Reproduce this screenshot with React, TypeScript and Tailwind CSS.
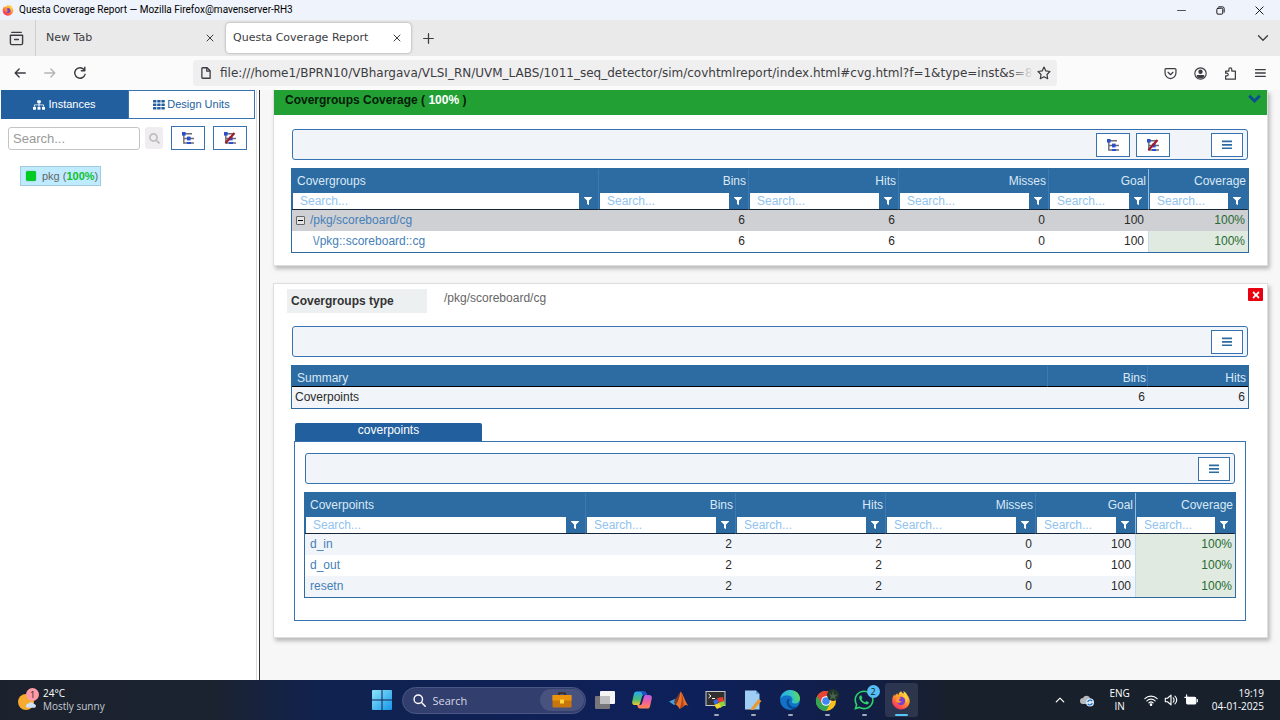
import React from "react";
import { FaSitemap, FaSearch, FaFilter, FaWhatsapp, FaTimes } from "react-icons/fa";

const UI_FONT = "font-['Open_Sans','Noto_Sans',sans-serif]";
const TITLE_FONT = "font-['Roboto','Noto_Sans',sans-serif]";
const FF_FONT = "font-['DejaVu_Sans',sans-serif]";

/* ---------- icons ---------- */

function FirefoxIcon({ className }: { className: string }) {
  return (
    <svg viewBox="0 0 24 24" className={className} aria-hidden="true">
      <defs>
        <linearGradient id="ffa" x1="0.8" y1="0" x2="0.2" y2="1">
          <stop offset="0" stopColor="#ffe14a" />
          <stop offset="0.45" stopColor="#ff9a2b" />
          <stop offset="0.8" stopColor="#ff4a4f" />
          <stop offset="1" stopColor="#e8286f" />
        </linearGradient>
      </defs>
      <path d="M12 1.500c1 1.500 2 2.200 3.200 3 .3-1.200 0-2.300-.5-3.300 3 1.300 4.300 3.300 5 5.300.6.400 1 .9 1.200 1.500 1 1.700 1.600 3.500 1.600 5.200C22.500 18.800 17.800 23.300 12 23.300S1.400 18.800 1.400 13c0-3 .9-5.800 2.600-8 .1 1 .4 1.700.8 2.200C5.400 5.500 6.600 4.500 7.600 4c0 1 .4 1.800 1 2.300C9.300 4 10.400 2.300 12 1.500z" fill="url(#ffa)" />
      <circle cx="12" cy="13.200" r="5" fill="#7a3fd0" />
      <path d="M6.500 9.500c2-1.600 4-1 5.500.3-1 .2-2 .8-2.300 1.900-.2 1.500 1.300 2.300 3.200 1.600-1 2.700-5 2.900-6.600.4-.7-1.400-.6-3 .2-4.200z" fill="#ff9630" />
      <path d="M14 7.500c3.500 1 5 4.500 3.500 8 2.500-2 3-6 1-9-1-1.300-3-1-4.500 1z" fill="#ffd23d" />
    </svg>
  );
}

function Stroke({ children, className = "size-4", width = 1.4 }: { children: React.ReactNode; className?: string; width?: number }) {
  return (
    <svg viewBox="0 0 16 16" className={className} fill="none" stroke="currentColor" strokeWidth={width} strokeLinecap="round" strokeLinejoin="round" aria-hidden="true">
      {children}
    </svg>
  );
}

function ThIcon() {
  return (
    <svg viewBox="0 0 12 10" className="h-[10px] w-3" fill="currentColor" aria-hidden="true">
      {[0, 3.5, 7].map((y) => [0, 4.2, 8.4].map((x) => <rect key={`${x}-${y}`} x={x} y={y} width="3.400" height="2.600" rx="0.400" />))}
    </svg>
  );
}

function TreeIcon({ crossed = false }: { crossed?: boolean }) {
  return (
    <svg viewBox="0 0 14 14" className="size-[14px]" aria-hidden="true">
      <path d="M2.800 3v9H6M2.800 7.500H6M4 2.800h7M9 7.500h4M7 12h6" stroke="#6b6b73" strokeWidth="1.400" fill="none" />
      <rect x="1" y="1" width="3.600" height="3.600" fill="#2a4fd0" />
      <rect x="6" y="5.600" width="3.600" height="3.800" fill="#2a4fd0" />
      <rect x="6" y="11" width="4" height="2" fill="#2a4fd0" />
      {crossed && <path d="M2.500 12 11.500 2" stroke="#a01c28" strokeWidth="2.200" />}
    </svg>
  );
}

/* ---------- browser chrome ---------- */

function TitleBar() {
  return (
    <div className={`flex h-5 shrink-0 items-center bg-[#eff3fb] pl-[2px] pr-4 text-black ${TITLE_FONT}`}>
      <FirefoxIcon className="size-3" />
      <h1 className="ml-[5px] flex-1 text-[10px] leading-5 whitespace-nowrap">Questa Coverage Report — Mozilla Firefox@mavenserver-RH3</h1>
      <div className="flex items-center gap-[30px]">
        <button aria-label="Minimize">
          <Stroke className="size-[9px]" width={1.2}><path d="M1 8h14" /></Stroke>
        </button>
        <button aria-label="Restore">
          <Stroke className="size-[9px]" width={1.6}><rect x="1.500" y="4" width="10.500" height="10.500" rx="2" /><path d="M5 1.500h6.500a3 3 0 0 1 3 3V11" /></Stroke>
        </button>
        <button aria-label="Close window">
          <Stroke className="size-[9px]" width={1.6}><path d="M1.500 1.500l13 13M14.500 1.500l-13 13" /></Stroke>
        </button>
      </div>
    </div>
  );
}

function CloseX() {
  return <Stroke className="size-2" width={2}><path d="M2 2l12 12M14 2L2 14" /></Stroke>;
}

function TabBar() {
  return (
    <div className={`flex h-9 shrink-0 items-center bg-[#eaeaea] text-[11px] text-[#3c3c42] ${FF_FONT}`}>
      <button aria-label="Recent browsing" className="flex h-full w-9 items-center justify-center border-r border-[#cfcfcf] pr-[3px]">
        <Stroke className="size-[15px]" width={1.5}><path d="M3 1.500h10M1.500 4.500h13v8.500a1.500 1.500 0 0 1-1.500 1.500H3A1.500 1.500 0 0 1 1.500 13zM6 9h4" /></Stroke>
      </button>
      <div className="flex h-full w-[190px] items-center justify-between pl-[10px] pr-3">
        <span>New Tab</span>
        <button aria-label="Close New Tab"><CloseX /></button>
      </div>
      <div className="flex h-[30px] w-[185px] items-center justify-between rounded bg-white pl-[7px] pr-[10px] shadow-[0_0_3px_rgba(0,0,0,0.35)]">
        <span className="whitespace-nowrap">Questa Coverage Report</span>
        <button aria-label="Close Questa Coverage Report"><CloseX /></button>
      </div>
      <button aria-label="Open a new tab" className="ml-3">
        <Stroke className="size-[11px]" width={1.8}><path d="M8 1v14M1 8h14" /></Stroke>
      </button>
      <button aria-label="List all tabs" className="ml-auto mr-[11px]">
        <Stroke className="size-3" width={1.8}><path d="M2 5l6 6 6-6" /></Stroke>
      </button>
    </div>
  );
}

function NavBar() {
  return (
    <div className={`flex h-[34px] shrink-0 items-center bg-[#fbfbfb] pl-[13px] pr-[14px] text-[#3c3c42] ${FF_FONT}`}>
      <div className="flex shrink-0 items-center gap-4">
        <button aria-label="Back"><Stroke className="size-[14px]" width={1.6}><path d="M14 8H2.500M7 3.500L2.500 8 7 12.500" /></Stroke></button>
        <button aria-label="Forward" disabled className="text-[#b5b5b7]"><Stroke className="size-[14px]" width={1.6}><path d="M2 8h11.500M9 3.500l4.500 4.500L9 12.500" /></Stroke></button>
        <button aria-label="Reload"><Stroke className="size-[14px]" width={1.6}><path d="M13.800 9.500A6 6 0 1 1 12.500 4M13.500 1.500V5.500H9.500" /></Stroke></button>
      </div>
      <div className="ml-[106px] flex h-[26px] min-w-0 flex-1 items-center rounded bg-[#efefef] pl-[7px] pr-[6px]">
        <Stroke className="size-[12px] shrink-0" width={1.7}><path d="M3.500 1h6l4 4v10h-10a1 1 0 0 1-1-1V2a1 1 0 0 1 1-1zM9 1v4.500h4.500" /></Stroke>
        <div className="relative ml-2 min-w-0 flex-1">
          <input
            aria-label="Address"
            readOnly
            className="block w-full overflow-hidden bg-transparent text-[12px] outline-none"
            value="file:///home1/BPRN10/VBhargava/VLSI_RN/UVM_LABS/1011_seq_detector/sim/covhtmlreport/index.html#cvg.html?f=1&type=inst&s=8&cp=1"
          />
          <div className="absolute inset-y-0 right-0 w-6 bg-linear-to-r from-transparent to-[#efefef]" />
        </div>
        <button aria-label="Bookmark this page" className="ml-1"><Stroke className="size-[14px]" width={1.4}><path d="M8 1.200l2.100 4.400 4.700.7-3.400 3.400.8 4.800L8 12.200l-4.200 2.300.8-4.800L1.200 6.300l4.700-.7z" /></Stroke></button>
      </div>
      <div className="ml-[107px] flex shrink-0 items-center gap-[17px]">
        <button aria-label="Pocket"><Stroke className="size-[13px]" width={1.5}><path d="M2.500 2h11a1.200 1.200 0 0 1 1.200 1.200V7.500a6.700 6.700 0 0 1-13.400 0V3.200A1.200 1.200 0 0 1 2.500 2zM5 6.500l3 3 3-3" /></Stroke></button>
        <button aria-label="Account">
          <Stroke className="size-[13px]" width={1.4}><circle cx="8" cy="8" r="7" /><circle cx="8" cy="5.800" r="2" fill="currentColor" /><path d="M4 10.500h8c0 1.500-1.800 2.500-4 2.500s-4-1-4-2.500z" fill="currentColor" /></Stroke>
        </button>
        <button aria-label="Extensions"><Stroke className="size-[13px]" width={1.5}><path d="M2 15v-4h1.500a1.700 1.700 0 0 0 0-3.400H2V5h4V3a1.800 1.800 0 0 1 3.600 0v2H14v10z" /></Stroke></button>
        <button aria-label="Application menu"><Stroke className="size-3" width={1.7}><path d="M2 3.500h13M2 8h13M2 12.500h13" /></Stroke></button>
      </div>
    </div>
  );
}

/* ---------- report page ---------- */

const boxButton = "flex items-center justify-center border border-[#3673b0] bg-white";

function Sidebar() {
  return (
    <aside className="w-[257px] shrink-0 border-r border-[#dcdcdc] bg-white">
      <div className="flex w-[255px] pl-px text-[11px] text-[#225f9f]">
        <button className="flex h-[29px] flex-1 items-center justify-center gap-[3px] border border-[#225f9f] bg-[#225f9f] text-white"><FaSitemap size={12} />Instances</button>
        <button className="flex h-[29px] flex-1 items-center justify-center gap-[2px] border border-[#3673b0] bg-white"><ThIcon />Design Units</button>
      </div>
      <div className="flex items-center pt-[7px] pl-2">
        <input aria-label="Search instances" placeholder="Search..." className="h-[23px] w-[132px] rounded-[3px] border border-[#c4c4c4] pl-1 text-[13px] outline-none placeholder:text-[#999]" />
        <button aria-label="Search" className="ml-[5px] flex h-[22px] w-[18px] items-center justify-center rounded-[3px] bg-[#efedef] text-[#c3bfc0]"><FaSearch size={11} /></button>
        <button aria-label="Expand all" className={`ml-2 h-6 w-[34px] ${boxButton}`}><TreeIcon /></button>
        <button aria-label="Collapse all" className={`ml-2 h-6 w-[34px] ${boxButton}`}><TreeIcon crossed /></button>
      </div>
      <ul className="pt-4 pl-5">
        <li className="flex h-5 w-[81px] items-center border border-[#a5cbe0] bg-[#beebff] pl-[5px] text-[11px] whitespace-nowrap text-[#666]">
          <span className="mr-[6px] size-[10px] rounded-[2px] bg-[#0c2] shadow-[0_0_1px_#555]" />
          <a href="#pkg">pkg (<b className="text-[#10c02c]">100%</b>)</a>
        </li>
      </ul>
    </aside>
  );
}

function Toolbar({ tree = false }: { tree?: boolean }) {
  return (
    <div className="mx-px flex h-[31px] items-center justify-end rounded-[3px] border border-[#3673b0] bg-[#f1f5f9] pr-1">
      {tree && (
        <>
          <button aria-label="Expand rows" className={`mr-[6px] h-6 w-[34px] ${boxButton}`}><TreeIcon /></button>
          <button aria-label="Collapse rows" className={`mr-[41px] h-6 w-[34px] ${boxButton}`}><TreeIcon crossed /></button>
        </>
      )}
      <button aria-label="Table menu" className={`h-6 w-8 text-[#2c6ca3] ${boxButton}`}>
        <svg viewBox="0 0 10 10" className="size-[10px]" fill="currentColor" aria-hidden="true"><path d="M0 .6h10v1.700H0zM0 4h10v1.700H0zM0 7.400h10v1.700H0z" /></svg>
      </button>
    </div>
  );
}

const HEADS = ["Bins", "Hits", "Misses", "Goal", "Coverage"];
const divider = ["border-r-[#3b7ab4]", "border-r-[#3b7ab4]", "border-r-[#3b7ab4]", "border-r-[#3b7ab4]", "border-r-[#8fbce0]", "border-r-transparent"];

type Row = { name: string; values: string[]; kind?: "group" | "child" };

function CoverTable({ title, rows }: { title: string; rows: Row[] }) {
  const heads = [title, ...HEADS];
  return (
    <table className="w-full table-fixed border-separate border-spacing-0 border border-[#2c6ca3] text-[12px] leading-[15px]">
      <colgroup>
        <col />
        <col className="w-[150px]" />
        <col className="w-[150px]" />
        <col className="w-[150px]" />
        <col className="w-[100px]" />
        <col className="w-[99px]" />
      </colgroup>
      <thead className="bg-[#2c6ca3] text-[#dbe8f5]">
        <tr>
          {heads.map((h, i) => (
            <th key={h} className={`h-6 border-r p-0 font-normal ${divider[i]} ${i === 0 ? "pl-[5px] text-left" : i === 5 ? "pr-px text-right" : "pr-[2px] text-right"}`}>{h}</th>
          ))}
        </tr>
        <tr>
          {heads.map((h, i) => (
            <td key={h} className={`h-[17px] border-r border-b border-b-[#16263a] p-0 ${divider[i]}`}>
              <div className="flex h-4 items-center pl-[1px]">
                <input aria-label={`Filter ${h}`} placeholder="Search..." className="h-4 min-w-0 flex-1 bg-white px-[7px] text-[12px] outline-none placeholder:text-[#91c3ee]" />
                <button aria-label={`Filter options for ${h}`} className="flex w-[19px] shrink-0 justify-center pr-px text-white">
                  <FaFilter size={8} />
                </button>
              </div>
            </td>
          ))}
        </tr>
      </thead>
      <tbody>
        {rows.map((r, n) => (
          <tr key={r.name} className={r.kind === "group" ? "bg-[#cfd0d4]" : r.kind === "child" || n % 2 ? "bg-white" : "bg-[#f1f5f9]"}>
            <td className="h-[21px] p-0 text-[#4580b8]">
              <div className={`flex items-center ${r.kind === "child" ? "pl-[21px]" : r.kind === "group" ? "pl-1" : "pl-[5px]"}`}>
                {r.kind === "group" && (
                  <button aria-label="Collapse group" className="mr-[5px] flex size-[9px] items-center justify-center rounded-[1px] border border-[#666] bg-[#e4e4e4]">
                    <span className="h-px w-[5px] bg-black" />
                  </button>
                )}
                <a href="#cg">{r.name}</a>
              </div>
            </td>
            {r.values.map((v, i) => (
              <td key={i} className={`h-[21px] p-0 text-right ${i === 4 ? "pr-[3px] text-[#276a33]" : "pr-1 text-[#2a2a2a]"} ${i === 3 ? `border-r ${r.kind === "group" ? "border-transparent" : "border-[#c3dbee]"}` : ""} ${i === 4 && r.kind !== "group" ? "bg-[#e0eae0]" : ""}`}>{v}</td>
            ))}
          </tr>
        ))}
      </tbody>
    </table>
  );
}

const card = "mr-3 border border-[#dedede] bg-white shadow-[2px_3px_4px_rgba(0,0,0,0.25)]";

function Report() {
  return (
    <main className="min-w-0 flex-1 overflow-hidden border-l border-[#333] bg-[#f7f7f7] pl-[13px]">
      <section className={`${card} border-t-0 pb-3`}>
        <header className="flex h-[25px] justify-between bg-[#22a034] pr-[6px] pl-[11px] text-[12px] leading-5 font-bold text-[#041b08]">
          <h2>Covergroups Coverage ( <span className="text-white">100%</span> )</h2>
          <button aria-label="Collapse section" className="mt-1 self-start text-[#0b4f92]">
            <svg viewBox="0 0 13 10" className="h-[10px] w-[13px]" fill="none" stroke="currentColor" strokeWidth="3" aria-hidden="true"><path d="M1.200 1.800l5.300 5.200 5.300-5.200" /></svg>
          </button>
        </header>
        <div className="flex flex-col gap-2 pt-[14px] pr-[18px] pl-[17px]">
          <Toolbar tree />
          <CoverTable
            title="Covergroups"
            rows={[
              { name: "/pkg/scoreboard/cg", values: ["6", "6", "0", "100", "100%"], kind: "group" },
              { name: "\\/pkg::scoreboard::cg", values: ["6", "6", "0", "100", "100%"], kind: "child" },
            ]}
          />
        </div>
      </section>

      <section className={`${card} mt-[17px] pb-4`}>
        <header className="flex justify-between pt-1 pr-1 pl-[13px] text-[12px]">
          <div className="flex pt-px">
            <h3 className="h-6 w-[140px] bg-[#edf0f1] pl-1 leading-6 font-bold text-[#333]">Covergroups type</h3>
            <p className="ml-[17px] leading-[18px] text-[#666]">/pkg/scoreboard/cg</p>
          </div>
          <button aria-label="Close details" className="flex h-[13px] w-[15px] items-center justify-center rounded-[1px] bg-[#e90010] text-white"><FaTimes size={10} /></button>
        </header>
        <div className="pt-[13px] pr-[18px] pl-[17px]">
          <Toolbar />
          <table className="mt-2 w-full table-fixed border-separate border-spacing-0 border border-[#2c6ca3] text-[12px] leading-[15px]">
            <colgroup>
              <col />
              <col className="w-[100px]" />
              <col className="w-[100px]" />
            </colgroup>
            <thead className="bg-[#2c6ca3] text-[#dbe8f5]">
              <tr>
                <th className="h-[21px] border-r border-b border-r-[#3b7ab4] border-b-black p-0 pt-1 pl-[5px] text-left font-normal">Summary</th>
                <th className="border-r border-b border-r-[#3b7ab4] border-b-black p-0 pt-1 pr-px text-right font-normal">Bins</th>
                <th className="border-b border-b-black p-0 pt-1 pr-[2px] text-right font-normal">Hits</th>
              </tr>
            </thead>
            <tbody className="bg-[#f1f4f8] text-[#2a2a2a]">
              <tr>
                <td className="h-[21px] p-0 pl-[3px]">Coverpoints</td>
                <td className="p-0 pr-[3px] text-right">6</td>
                <td className="p-0 pr-[3px] text-right">6</td>
              </tr>
            </tbody>
          </table>
          <div className="mx-[3px] mt-[14px]">
            <button className="ml-px block h-[18px] w-[187px] rounded-t-[2px] bg-[#225f9f] pb-[3px] text-[12px] leading-[15px] text-white">coverpoints</button>
            <div className="flex flex-col gap-2 border border-[#3673b0] px-[9px] pt-[11px] pb-[22px]">
              <Toolbar />
              <CoverTable
                title="Coverpoints"
                rows={[
                  { name: "d_in", values: ["2", "2", "0", "100", "100%"] },
                  { name: "d_out", values: ["2", "2", "0", "100", "100%"] },
                  { name: "resetn", values: ["2", "2", "0", "100", "100%"] },
                ]}
              />
            </div>
          </div>
        </div>
      </section>
    </main>
  );
}

/* ---------- taskbar ---------- */

function AppButton({ label, running = false, active = false, children }: { label: string; running?: boolean; active?: boolean; children: React.ReactNode }) {
  return (
    <button aria-label={label} className={`relative flex h-[34px] w-[33px] items-center justify-center rounded-[3px] ${active ? "bg-white/10" : ""}`}>
      {children}
      {running && <span className={`absolute bottom-[1px] h-[2px] rounded-full ${active ? "w-[13px] bg-[#55c8f5]" : "w-[5px] bg-[#a2a8b8]"}`} />}
    </button>
  );
}

function Taskbar() {
  return (
    <footer className={`flex h-10 shrink-0 items-center bg-[linear-gradient(90deg,#1c222d_0%,#1b2331_17%,#10224f_25%,#0e205a_55%,#121e44_68%,#18202c_74%,#18202c_100%)] text-[10px] leading-[13px] text-white ${UI_FONT}`}>
      <div className="flex flex-1 items-center pl-[17px]">
        <button className="flex items-center gap-1 text-left">
          <span className="relative block">
            <svg viewBox="0 0 22 24" className="h-6 w-[22px]" aria-hidden="true">
              <circle cx="9" cy="14" r="8" fill="#f7a930" />
              <path d="M9 18.500a2.800 2.800 0 0 1 2.700-3 3 3 0 0 1 5.200.5 1.900 1.900 0 0 1 2 2.300 1.500 1.500 0 0 1-1.500 1.400h-7A1.500 1.500 0 0 1 9 18.500z" fill="#cfe0f8" />
            </svg>
            <span className="absolute top-0 right-0 flex size-[13px] items-center justify-center rounded-full bg-[#ff9ba6] text-[9px] text-[#222]">1</span>
          </span>
          <span className="whitespace-nowrap">24°C<br /><span className="text-[#c5cad4]">Mostly sunny</span></span>
        </button>
      </div>
      <div className="flex items-center pl-2">
        <button aria-label="Start">
          <svg viewBox="0 0 20 20" className="size-5" aria-hidden="true">
            <defs><linearGradient id="win" x1="0" y1="0" x2="1" y2="1"><stop offset="0" stopColor="#8ce6fb" /><stop offset="1" stopColor="#1595e8" /></linearGradient></defs>
            <path d="M0 1a1 1 0 0 1 1-1h8.500v9.500H0zM10.500 0H19a1 1 0 0 1 1 1v8.500h-9.500zM0 10.500h9.500V20H1a1 1 0 0 1-1-1zM10.500 10.500H20V19a1 1 0 0 1-1 1h-8.500z" fill="url(#win)" />
          </svg>
        </button>
        <label className="ml-[10px] flex h-[27px] w-[184px] items-center rounded-full border border-[#4a5684] bg-[#323e6e] pr-[1px] pl-[10px]">
          <Stroke className="size-[13px] shrink-0" width={1.7}><circle cx="6.500" cy="6.500" r="5.200" /><path d="M10.500 10.500L15 15" /></Stroke>
          <input aria-label="Search" placeholder="Search" className="ml-[7px] min-w-0 flex-1 bg-transparent text-[11px] outline-none placeholder:text-[#d5d9e5]" />
          <span className="flex h-[22px] w-11 items-center justify-center rounded-full bg-[#48527f]">
            <svg viewBox="0 0 20 16" className="h-4 w-5" aria-hidden="true">
              <path d="M7 3V1h6v2" fill="none" stroke="#3a2a22" strokeWidth="1.600" />
              <rect x="0.500" y="3" width="19" height="12.500" rx="1" fill="#c8760c" />
              <path d="M.5 3h19v5.500H.5z" fill="#e9930f" />
              <rect x="8" y="7.500" width="4" height="4" rx="0.600" fill="#ffd83a" />
            </svg>
          </span>
        </label>
        <div className="ml-[3px] flex items-center gap-1">
          <AppButton label="Task view">
            <svg viewBox="0 0 20 18" className="h-[18px] w-5" aria-hidden="true"><rect x="5" y="0" width="15" height="13" rx="1" fill="#f5f5f5" /><rect x="0" y="5" width="15" height="13" rx="1" fill="#77777a" /><path d="M5 5h10v8H5z" fill="#bfbfc1" /></svg>
          </AppButton>
          <AppButton label="Copilot">
            <svg viewBox="0 0 20 20" className="size-5" aria-hidden="true">
              <defs>
                <linearGradient id="cpa" x1="0" y1="0" x2="0" y2="1"><stop offset="0" stopColor="#26a9f0" /><stop offset="0.600" stopColor="#4bbd72" /><stop offset="1" stopColor="#f5c72c" /></linearGradient>
                <linearGradient id="cpb" x1="0" y1="0" x2="0" y2="1"><stop offset="0" stopColor="#b45cf0" /><stop offset="0.500" stopColor="#f0609a" /><stop offset="1" stopColor="#ff8a4a" /></linearGradient>
              </defs>
              <path d="M4.500 1.500H12c1.400 0 2 .8 2.400 2l.4 1.500h-2.600c-1.200 0-1.800.6-2.200 1.800L8 13.500c-.4 1.200-1 1.500-2 1.500H3c-2.400 0-3.200-1.600-2.700-3.700l1.500-7C2.300 2.300 3 1.500 4.500 1.500z" fill="url(#cpa)" />
              <path d="M15.500 18.500H8c-1.400 0-2-.8-2.400-2L5.200 15h2.600c1.200 0 1.800-.6 2.200-1.800l2-6.700c.4-1.200 1-1.500 2-1.500h3c2.400 0 3.200 1.600 2.700 3.700l-1.500 7c-.5 2-1.200 2.800-2.700 2.800z" fill="url(#cpb)" />
              <path d="M8 1.500H12c1.400 0 2 .8 2.400 2l.4 1.500h-3c-.9 0-1.500-.5-1.800-1.500C9.600 2.300 9 1.500 8 1.500z" fill="#1c51c9" />
            </svg>
          </AppButton>
          <AppButton label="MATLAB">
            <svg viewBox="0 0 20 18" className="h-[18px] w-5" aria-hidden="true"><path d="M0 10.500L6 8l3.500 3L5 14z" fill="#4aa3d8" /><path d="M6 8c2-1 4-5.500 5.500-7.500L9.500 11 7 13.500 5 12z" fill="#7a3a2a" /><path d="M11.500.5C14 2 16 11 19.500 15c-2.500-1.500-3.500-1-5 .5L10.500 18c-.8-2-2-3.500-4-4.500C9 12 10.500 5 11.500.5z" fill="#e8722a" /><path d="M12 1c1 4 1.500 10-1.500 17l4-2.500C15 11 13.500 4 12 1z" fill="#b3401c" /></svg>
          </AppButton>
          <AppButton label="MobaXterm" running>
            <svg viewBox="0 0 22 20" className="h-5 w-[22px]" aria-hidden="true"><rect x="1" y="1.500" width="19" height="14" fill="#303030" stroke="#c9c9c9" /><path d="M3.500 4l2.500 2-2.500 2M7 8.500h3" stroke="#fff" fill="none" /><path d="M8 11l4-2 2 3-4 3z" fill="#3a6be0" /><path d="M12 8l6-1 1 4-5 2z" fill="#e93a2a" /><path d="M13 13l6-2 1 4-5 3z" fill="#8dd33a" /><path d="M9 15l5-2 2 4-4 2z" fill="#f5d22c" /></svg>
          </AppButton>
          <AppButton label="Notepad" running>
            <svg viewBox="0 0 18 20" className="h-5 w-[18px]" aria-hidden="true"><path d="M1 .5h11l3.500 3.500v15.500H1z" fill="#9fcdf3" /><path d="M12 .5V4h3.500z" fill="#5b9fd8" /><path d="M7 18.500l7.500-9.500 3 2-8 9-3 .5z" fill="#e89a2c" /></svg>
          </AppButton>
          <AppButton label="Microsoft Edge" running>
            <svg viewBox="0 0 20 20" className="size-5" aria-hidden="true">
              <defs><linearGradient id="edg" x1="0" y1="0.500" x2="1" y2="0.300"><stop offset="0" stopColor="#28a8ea" /><stop offset="0.600" stopColor="#35c6c0" /><stop offset="1" stopColor="#63d94a" /></linearGradient></defs>
              <circle cx="10" cy="10" r="10" fill="#1272c8" />
              <path d="M7.500 9c-2.500 3.500 0 9.500 5 10 3 0 5-1.500 6-3-5 2.500-10 0-9.500-4.500.1-1 .5-1.700 1-2.200z" fill="#0c4a94" />
              <path d="M0 9.500C.5 4 5 0 10.200 0 16 0 20 4 20 8.500c0 3-2.400 5-5.200 5-2.300 0-3.200-.8-3-1.700.2-.6.8-.9.8-2.200C12.600 7 10 5.500 7 5.500 3 5.500.5 7.700 0 9.500z" fill="url(#edg)" />
            </svg>
          </AppButton>
          <AppButton label="Google Chrome" running>
            <svg viewBox="0 0 24 22" className="h-[22px] w-6" aria-hidden="true">
              <circle cx="11" cy="12" r="10" fill="#fbc116" />
              <path d="M11 12L2.300 7A10 10 0 0 0 11 22l4.500-8z" fill="#34a653" />
              <path d="M2.300 7A10 10 0 0 1 19.700 7H11z" fill="#e94335" />
              <path d="M2.300 7L6.500 14 11 7z" fill="#e94335" />
              <circle cx="11" cy="12" r="4.800" fill="#fff" /><circle cx="11" cy="12" r="3.800" fill="#4285f4" />
              <circle cx="18" cy="6" r="6" fill="#24352a" /><path d="M14 4l3 2 1-5 1 5 4-1-3 3 1 3-3-2-3 2 1-3z" fill="#49654d" />
            </svg>
          </AppButton>
          <AppButton label="WhatsApp" running>
            <FaWhatsapp size={22} className="text-[#2cd46b]" />
            <span className="absolute top-[2px] right-[1px] flex size-[13px] items-center justify-center rounded-full bg-[#56bdf5] text-[9px] text-[#122]">2</span>
          </AppButton>
          <AppButton label="Firefox" running active>
            <FirefoxIcon className="size-5" />
          </AppButton>
        </div>
      </div>
      <div className="flex flex-1 items-center justify-end pr-4">
        <button aria-label="Show hidden icons"><Stroke className="size-[10px]" width={2}><path d="M2 11l6-6 6 6" /></Stroke></button>
        <button aria-label="OneDrive" className="ml-[14px]">
          <svg viewBox="0 0 16 14" className="h-[14px] w-4" aria-hidden="true"><path d="M1 8a3 3 0 0 1 3-3 4 4 0 0 1 7.300.5A3 3 0 0 1 13 11H4A3 3 0 0 1 1 8z" fill="#b7babd" /><circle cx="11" cy="9.500" r="4" fill="#dbeafa" /><path d="M8.700 9a2.500 2.500 0 0 1 4.500-.8M13.300 10a2.500 2.500 0 0 1-4.500.8" fill="none" stroke="#1b73c4" strokeWidth="1.200" /></svg>
        </button>
        <button className="ml-[14px] text-center">ENG<br />IN</button>
        <button aria-label="Network, sound and battery" className="ml-[14px] flex items-center gap-[6px]">
          <Stroke className="size-[14px]" width={1.4}><path d="M1 6.500a10 10 0 0 1 14 0M3.300 9a6.800 6.800 0 0 1 9.400 0M5.600 11.300a3.400 3.400 0 0 1 4.800 0" /><circle cx="8" cy="13.300" r="0.800" fill="currentColor" /></Stroke>
          <Stroke className="size-[14px]" width={1.3}><path d="M1.500 6v4h2.500l4 3.500v-11L4 6zM10.500 5.500a3.500 3.500 0 0 1 0 5M12.500 3.500a6 6 0 0 1 0 9" /></Stroke>
          <Stroke className="size-[14px]" width={1.3}><rect x="3" y="5" width="10.500" height="7.500" rx="1.500" fill="currentColor" /><path d="M15.200 7.500v2.500M3 2v4M1 5h4" /></Stroke>
        </button>
        <button className="ml-[14px] text-right whitespace-nowrap">19:19<br />04-01-2025</button>
      </div>
    </footer>
  );
}

export default function App() {
  return (
    <div className="flex min-h-screen flex-col bg-white font-['Liberation_Sans',Arial,sans-serif]">
      <TitleBar />
      <TabBar />
      <NavBar />
      <div className="flex flex-1 gap-[2px] bg-white">
        <Sidebar />
        <Report />
      </div>
      <Taskbar />
    </div>
  );
}
